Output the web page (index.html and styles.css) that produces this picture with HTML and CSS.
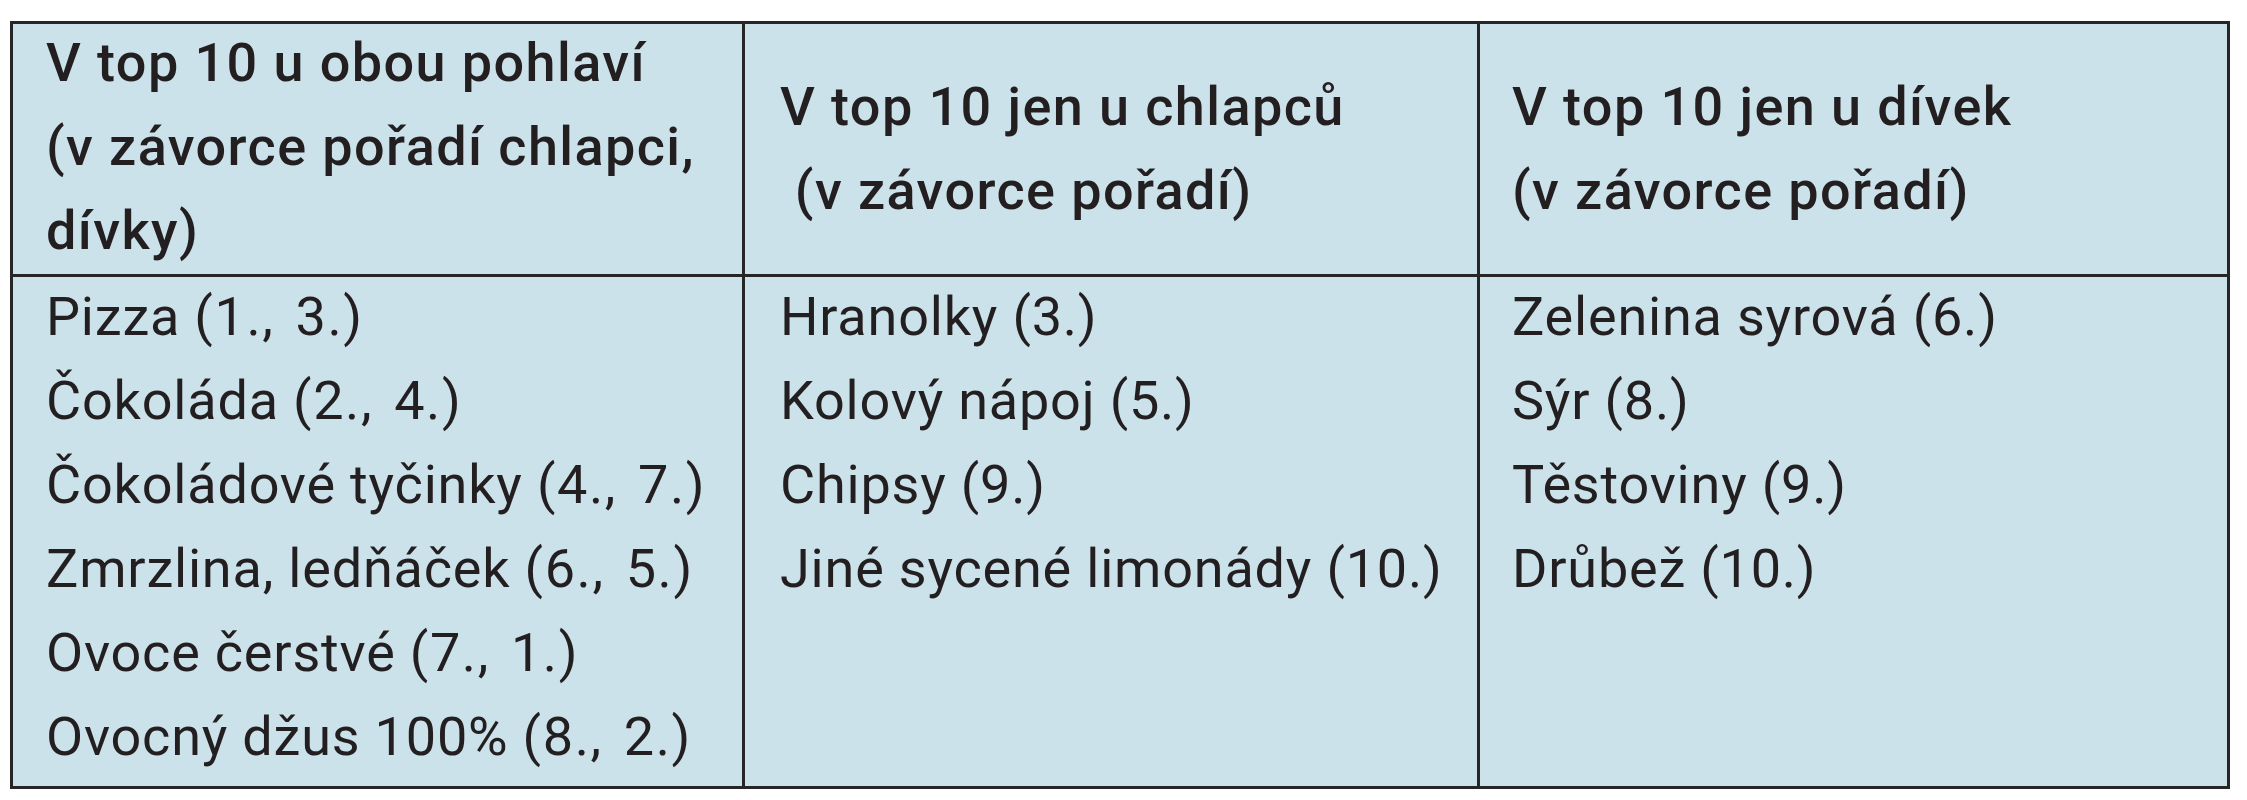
FILE: index.html
```html
<!DOCTYPE html>
<html lang="cs">
<head>
<meta charset="utf-8">
<title>Top 10 potravin</title>
<link rel="stylesheet" href="styles.css">
</head>
<body>
<div class="grid">
  <div class="cell head col1"><div class="head-text c1">V top 10 u obou pohlaví<br>(v závorce pořadí chlapci,<br>dívky)</div></div>
  <div class="cell head col2"><div class="head-text">V top 10 jen u chlapců<br>&nbsp;(v závorce pořadí)</div></div>
  <div class="cell head col3"><div class="head-text">V top 10 jen u dívek<br>(v závorce pořadí)</div></div>
  <div class="cell body col1">
    <ul class="list">
      <li>Pizza <span class="rank">(1., 3.)</span></li>
      <li>Čokoláda <span class="rank">(2., 4.)</span></li>
      <li>Čokoládové tyčinky <span class="rank">(4., 7.)</span></li>
      <li>Zmrzlina, ledňáček <span class="rank">(6., 5.)</span></li>
      <li>Ovoce čerstvé <span class="rank">(7., 1.)</span></li>
      <li>Ovocný džus 100% <span class="rank">(8., 2.)</span></li>
    </ul>
  </div>
  <div class="cell body col2">
    <ul class="list">
      <li>Hranolky (3.)</li>
      <li>Kolový nápoj (5.)</li>
      <li>Chipsy (9.)</li>
      <li>Jiné sycené limonády (10.)</li>
    </ul>
  </div>
  <div class="cell body col3">
    <ul class="list">
      <li>Zelenina syrová (6.)</li>
      <li>Sýr (8.)</li>
      <li>Těstoviny (9.)</li>
      <li>Drůbež (10.)</li>
    </ul>
  </div>
</div>
</body>
</html>
```
FILE: styles.css
```css
html, body {
  margin: 0;
  padding: 0;
  background: #ffffff;
}

body {
  padding: 21px 17px 11px 10px;
  font-family: Roboto, "Liberation Sans", sans-serif;
  color: #231f20;
}

.grid {
  display: grid;
  grid-template-columns: 732px 735px 747px;
  grid-template-rows: 253px 509px;
  width: 2214px;
  border: 3px solid #262626;
  background: #cce2eb;
}

.cell {
  box-sizing: border-box;
  overflow: visible;
}

.col1, .col2 {
  border-right: 3px solid #262626;
}

.head {
  border-bottom: 3px solid #262626;
  display: flex;
  align-items: center;
  font-size: 54px;
  font-weight: 500;
  line-height: 84px;
  letter-spacing: 1.4px;
}

.head-text.c1 {
  margin-top: -4px;
}

.col1 { padding-left: 33px; }
.col2 { padding-left: 35px; }
.col3 { padding-left: 32px; }

.list {
  list-style: none;
  margin: -2px 0 0 0;
  padding: 0;
  font-size: 54px;
  line-height: 84px;
  letter-spacing: 0.8px;
}

.rank {
  letter-spacing: 1.6px;
  word-spacing: 6px;
}
```
